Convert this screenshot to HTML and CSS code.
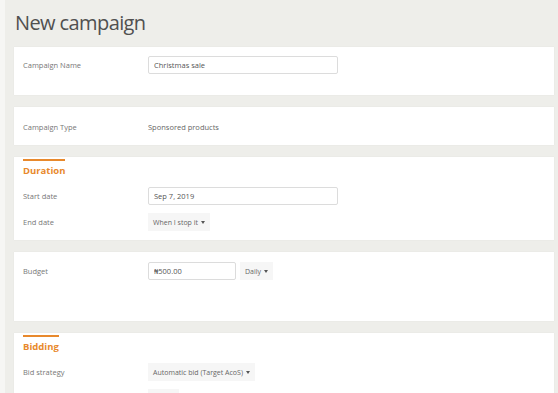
FILE: index.html
```html
<!DOCTYPE html>
<html lang="en">
<head>
    <meta charset="UTF-8">
    <meta name="viewport" content="width=device-width, initial-scale=1.0">
    <title>New campaign</title>
    <link rel="stylesheet" href="styles.css">
</head>
<body>

<div class="page">
    <h1>New campaign</h1>

    <div class="card card-name">
        <div class="row">
            <span class="label">Campaign Name</span>
            <input class="field" type="text" value="Christmas sale">
        </div>
    </div>

    <div class="card card-type">
        <div class="row">
            <span class="label">Campaign Type</span>
            <span class="value">Sponsored products</span>
        </div>
    </div>

    <div class="card card-section">
        <h3 class="section-title">Duration</h3>
        <div class="row">
            <span class="label">Start date</span>
            <input class="field" type="text" value="Sep 7, 2019">
        </div>
        <div class="row">
            <span class="label">End date</span>
            <button class="dropdown">When I stop it <span class="caret"></span></button>
        </div>
    </div>

    <div class="card card-budget">
        <div class="row">
            <span class="label">Budget</span>
            <input class="field field-short" type="text" value="₦500.00">
            <button class="dropdown">Daily <span class="caret"></span></button>
        </div>
    </div>

    <div class="card card-section">
        <h3 class="section-title">Bidding</h3>
        <div class="row">
            <span class="label">Bid strategy</span>
            <button class="dropdown">Automatic bid (Target AcoS) <span class="caret"></span></button>
        </div>
        <div class="row">
            <span class="label">Desired ACoS</span>
            <button class="dropdown">10% <span class="caret"></span></button>
        </div>
    </div>
</div>

</body>
</html>
```

FILE: styles.css
```css
body {
    margin: 0;
    font-family: 'Open Sans', 'Noto Sans', sans-serif;
    background-color: #eeeeea;
    color: #666;
    overflow: hidden;
}

.page {
    border-left: 5px solid #f6f6f4;
    padding: 10px 4px 0 9px;
    display: flex;
    flex-direction: column;
    gap: 12px;
}

h1 {
    margin: 0 0 -1px 1px;
    font-size: 20px;
    line-height: 26px;
    font-weight: 400;
    letter-spacing: -0.6px;
    color: #505050;
}

.card {
    background-color: #fff;
    padding: 0 9px;
    box-shadow: 0 0 1px rgba(0, 0, 0, 0.08);
}

.card-name {
    padding-top: 9px;
    padding-bottom: 21px;
}

.card-type {
    padding-top: 11px;
    padding-bottom: 9px;
}

.card-section {
    padding-bottom: 9px;
}

.card-budget {
    padding-top: 10px;
    padding-bottom: 41px;
}

.section-title {
    display: inline-block;
    margin: 0 0 8px 0;
    padding-top: 2px;
    border-top: 2px solid #e8892c;
    font-size: 9.5px;
    line-height: 16px;
    font-weight: 700;
    color: #e8892c;
}

.row {
    display: flex;
    align-items: center;
    gap: 8px;
    height: 18px;
    font-size: 7.5px;
}

.card-section .row + .row {
    margin-top: 8px;
}

.label {
    width: 117px;
    color: #777;
}

.value {
    color: #666;
}

.field {
    box-sizing: border-box;
    width: 190px;
    height: 18px;
    padding: 0 5px;
    border: 1px solid #dcdcdc;
    border-radius: 2px;
    font-family: inherit;
    font-size: 7.5px;
    color: #555;
}

.field-short {
    width: 88px;
    margin-right: -4px;
}

.dropdown {
    height: 18px;
    padding: 0 5px;
    border: none;
    background-color: #f6f6f6;
    font-family: inherit;
    font-size: 7px;
    color: #666;
}

.caret {
    display: inline-block;
    width: 0;
    height: 0;
    margin-left: 1px;
    vertical-align: middle;
    border-left: 2.5px solid transparent;
    border-right: 2.5px solid transparent;
    border-top: 3px solid #555;
}
```
